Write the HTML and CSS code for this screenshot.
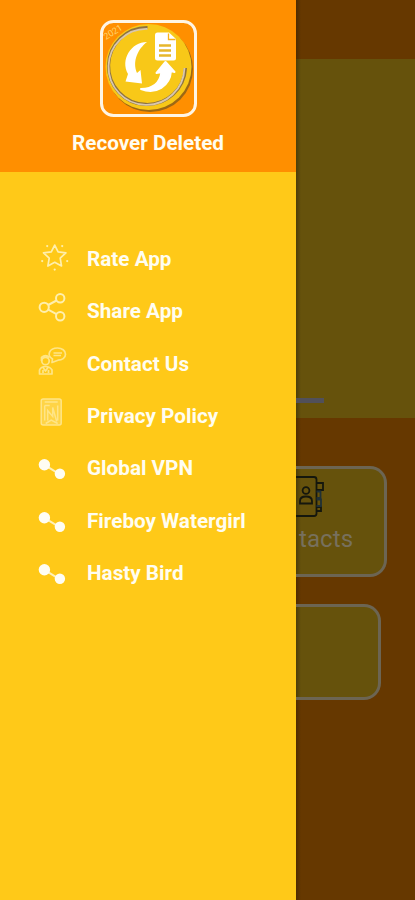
FILE: index.html
```html
<!DOCTYPE html>
<html lang="en">
<head>
<meta charset="utf-8">
<meta name="viewport" content="width=device-width, initial-scale=1">
<title>Recover Deleted</title>
<link rel="stylesheet" href="styles.css">
</head>
<body>
<div class="screen">
  <aside class="drawer">
    <header class="drawer-header">
      <svg class="logo" width="97" height="97" viewBox="0 0 97 97" aria-hidden="true">
        <defs><clipPath id="badge"><rect x="3" y="3" width="91" height="91" rx="10"/></clipPath></defs>
        <g clip-path="url(#badge)">
          <circle cx="50" cy="49" r="43" fill="#9c6814"/>
          <circle cx="48.5" cy="47" r="43" fill="#f8c818"/>
          <path d="M47.500 7.500A38.500 38.500 0 1 0 85.500 48" fill="none" stroke="#8d7340" stroke-width="3.200"/>
          <path d="M47.500 8.900A38 38 0 1 0 84.500 48" fill="none" stroke="#d9c7ad" stroke-width="1.800"/>
        </g>
        <text class="logo-year" x="6" y="20" transform="rotate(-32 6 20)">2021</text>
        <path d="M47 22C31 22 20 40 28 54L25.500 61.500 42 63.500 40.500 50 37 53C32 41 38 29 47 22Z" fill="#fff"/>
        <path d="M41 69C56 75 70 66 71 51L74.500 52 65.500 42 56.500 53 61.500 52C60 63 53 69 41 69Z" fill="#fff" stroke="#fff" stroke-width="2" stroke-linejoin="round"/>
        <path d="M57.500 12.500H69L76 19V38Q76 40.500 73.500 40.500H57.500Q55 40.500 55 38V15Q55 12.500 57.500 12.500Z" fill="#fff"/>
        <path d="M68.500 13.500V19.500H75.500" fill="none" stroke="#f8b218" stroke-width="1.300"/>
        <path d="M59 25.500H71M59 30.500H71M59 35.500H71" stroke="#e7b72b" stroke-width="2.600"/>
        <rect x="1.500" y="1.500" width="94" height="94" rx="12" fill="none" stroke="#fff5e4" stroke-width="3"/>
      </svg>
      <h1 class="title">Recover Deleted</h1>
    </header>
    <nav class="menu">
      <a class="item"><svg class="icon" viewBox="0.8 0.4 32 32"><g fill="none" stroke="#ffefad" stroke-width="1.700" stroke-linejoin="round"><path d="M17.500 4.500 20.900 11.200 28.700 12.200 23 17.500 24.300 25.400 17.500 21.700 10.700 25.400 12 17.500 6.300 12.200 14.100 11.200Z"/></g><g fill="#ffefad"><circle cx="10" cy="5.500" r="1.100"/><circle cx="25" cy="5.500" r="1.100"/><circle cx="5" cy="20.500" r="1.100"/><circle cx="30" cy="20.500" r="1.100"/><circle cx="17.500" cy="29" r="1.100"/></g></svg><span>Rate App</span></a>
      <a class="item"><svg class="icon" viewBox="0.8 2.2 32 32"><g fill="none" stroke="#ffefad" stroke-width="2"><circle cx="7" cy="16.500" r="4.600"/><circle cx="23" cy="7.500" r="4.200"/><circle cx="23" cy="25.500" r="4.200"/><path d="M11 14.200 19.300 9.700M11 18.800 19.300 23.300"/></g></svg><span>Share App</span></a>
      <a class="item"><svg class="icon faint" viewBox="1 -1 32 32"><g fill="none" stroke="#ffefad" stroke-width="1.700" stroke-linejoin="round"><path d="M20.500 1C25 1 28.500 3.500 28.500 7.200S25 13.200 21 13.200L15 15.500 15.500 12C9.500 8.500 12 1 20.500 1Z"/><path d="M16.500 6H25M16.500 8.500H24"/><circle cx="8.500" cy="14" r="3.700"/><path d="M4.500 14V10.500Q8.500 7 12.500 10.500M2.500 27V23Q4 19.500 8.500 19.500T15 23V27ZM6 20.500 8.500 24 11 20.500M6 26V23M11.500 26V23"/></g></svg><span>Contact Us</span></a>
      <a class="item"><svg class="icon faint" viewBox="0.3 0.5 32 32"><rect x="3.500" y="1.500" width="20" height="26" rx="2" fill="#ffefad" opacity=".42"/><g fill="none" stroke="#ffefad" stroke-width="1.500"><rect x="3.500" y="1.500" width="20" height="26" rx="2"/><path d="M7 4.500H20M7 8H12M7 8V23M20 8V23M10 23V13L15 19V10L19 24M8 26 13.500 22.500 20 26"/></g></svg><span>Privacy Policy</span></a>
      <a class="item"><svg class="icon" viewBox="0.6 -5.3 32 32"><path d="M7 9.500 22.500 19" stroke="#fff1b8" stroke-width="2"/><circle cx="7" cy="9.500" r="5.700" fill="#fffdf3"/><circle cx="22.500" cy="18.500" r="5.200" fill="#fffdf3"/></svg><span>Global VPN</span></a>
      <a class="item"><svg class="icon" viewBox="0.6 -5.3 32 32"><path d="M7 9.500 22.500 19" stroke="#fff1b8" stroke-width="2"/><circle cx="7" cy="9.500" r="5.700" fill="#fffdf3"/><circle cx="22.500" cy="18.500" r="5.200" fill="#fffdf3"/></svg><span>Fireboy Watergirl</span></a>
      <a class="item"><svg class="icon" viewBox="0.6 -5.3 32 32"><path d="M7 9.500 22.500 19" stroke="#fff1b8" stroke-width="2"/><circle cx="7" cy="9.500" r="5.700" fill="#fffdf3"/><circle cx="22.500" cy="18.500" r="5.200" fill="#fffdf3"/></svg><span>Hasty Bird</span></a>
    </nav>
  </aside>
  <main class="page">
    <div class="app-bar"></div>
    <section class="banner"><div class="indicator"></div></section>
    <section class="cards">
      <div class="card contacts">
        <svg class="book" width="29" height="42" viewBox="0 0 29 42" aria-hidden="true">
          <g fill="none" stroke="#15170d" stroke-width="1.800"><path d="M0 1H18Q20.500 1 20.500 3.500V37.500Q20.500 40 18 40H0"/><circle cx="10" cy="14.500" r="3.400"/><path d="M4 27.500V25Q4 20.500 10 20.500T16 25V27.500Z"/><path d="M20.500 7H27V14H20.500M20.500 31H25V35H20.500"/></g>
          <g fill="none" stroke="#203036" stroke-width="1.800"><path d="M20.500 15.500H24.500V22H20.500M20.500 23.500H25V30H20.500"/></g>
        </svg>
        <span class="card-label">tacts</span>
      </div>
      <div class="card blank"></div>
    </section>
  </main>
</div>
</body>
</html>
```
FILE: styles.css
```css
* { box-sizing: border-box; }
body {
  margin: 0;
  font-family: Roboto, "Liberation Sans", sans-serif;
}
.screen {
  display: flex;
  width: 415px;
  height: 900px;
  overflow: hidden;
}
.drawer {
  flex: 0 0 296px;
  background: #ffc918;
  color: #fffdf0;
}
.drawer-header {
  display: flex;
  flex-direction: column;
  align-items: center;
  height: 172px;
  padding-top: 20px;
  background: #ff8f00;
}
.logo { display: block; }
.logo-year {
  font-size: 9px;
  fill: #ffd36c;
}
.title {
  margin: 14px 0 0;
  font-size: 20.7px;
  line-height: 24px;
  font-weight: 700;
  white-space: nowrap;
}
.menu {
  display: flex;
  flex-direction: column;
  padding: 61px 0 0 38px;
}
.item {
  display: flex;
  align-items: center;
  gap: 17px;
  height: 52.3px;
  font-size: 20.7px;
  font-weight: 700;
  white-space: nowrap;
}
.icon {
  flex: none;
  width: 32px;
  height: 32px;
  margin-top: -4px;
}
.faint { opacity: .75; }
.page {
  flex: 1;
  background: linear-gradient(90deg, #4e2c00, #663800 5px);
}
.app-bar { height: 59px; }
.banner {
  display: flex;
  align-items: flex-end;
  height: 359px;
  padding-bottom: 15px;
  background: linear-gradient(90deg, #4c3e08, #66520c 5px);
}
.indicator {
  width: 28px;
  height: 5px;
  background: #51505a;
}
.cards {
  display: flex;
  flex-direction: column;
  gap: 27px;
  padding-top: 48px;
}
.card {
  border: 3px solid #6c6553;
  border-left: 0;
  border-radius: 0 17px 17px 0;
  background: linear-gradient(90deg, #4c3e08, #66520c 5px);
}
.contacts {
  width: 91px;
  height: 111px;
  padding-top: 7px;
}
.blank {
  width: 85px;
  height: 96px;
}
.book { display: block; }
.card-label {
  display: block;
  margin-top: 7px;
  padding-left: 3px;
  color: #77705d;
  font-size: 24px;
  line-height: 28px;
  letter-spacing: .1px;
}
```
